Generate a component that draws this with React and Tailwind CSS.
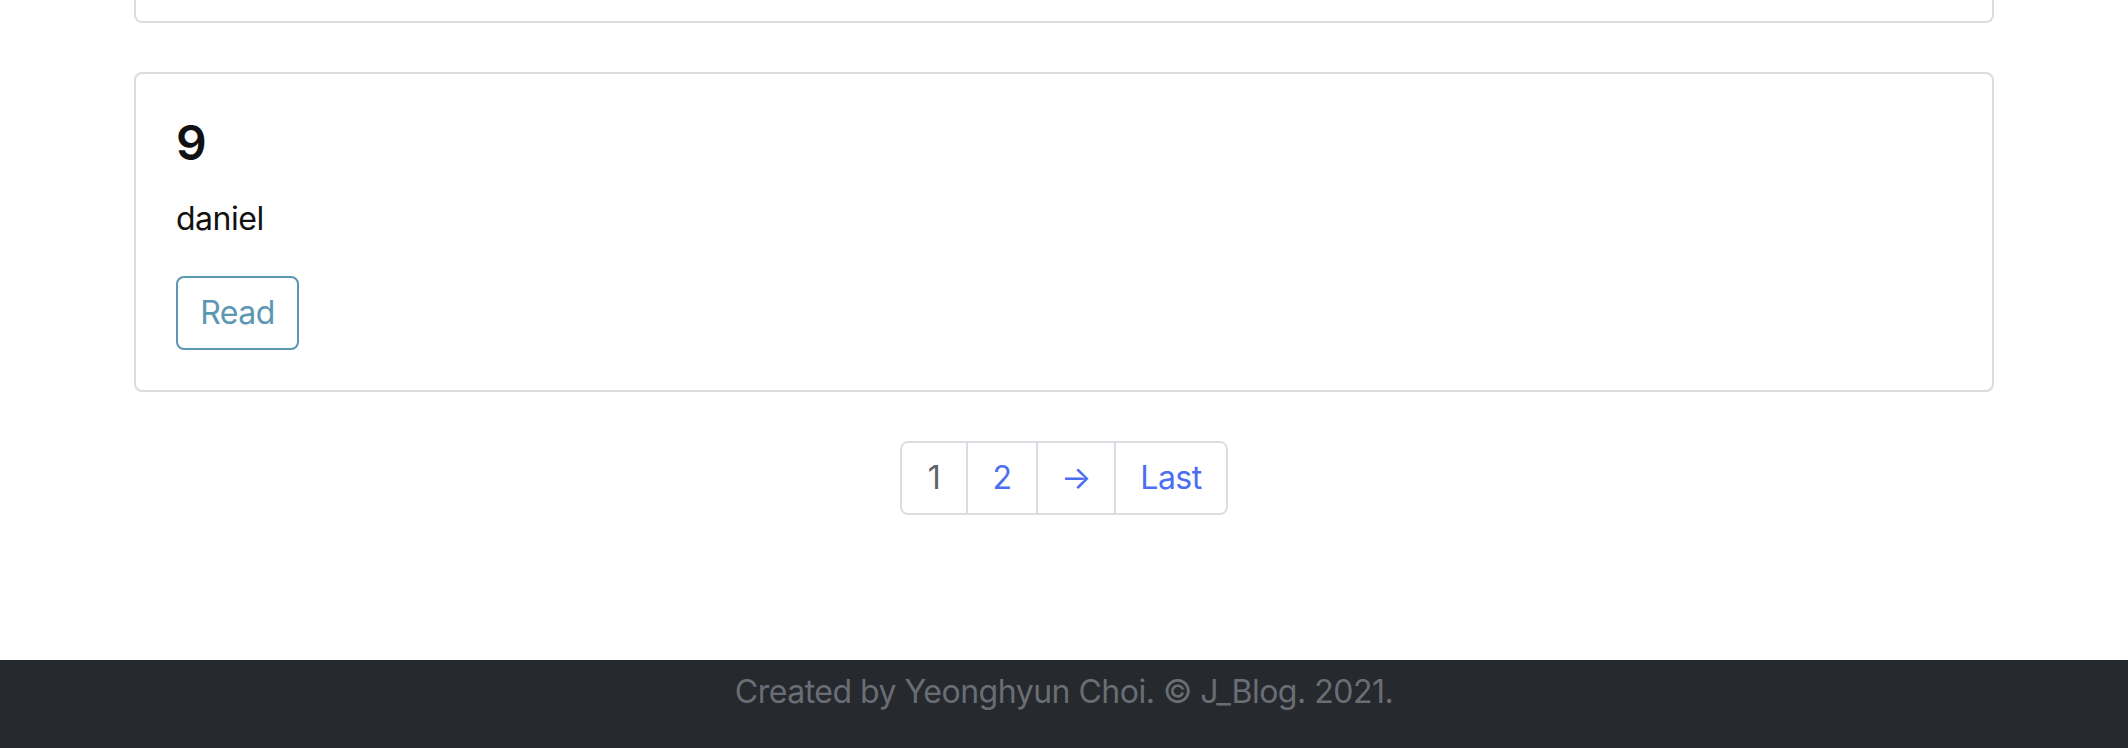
export default function App() {
  const pages = [
    { label: "1", w: "w-[64px]", active: true },
    { label: "2", w: "w-[70px]" },
    { label: "→", w: "w-[78px]" },
    { label: "Last", w: "w-[112px]" },
  ];

  return (
    <div className="min-h-[748px] flex flex-col bg-white font-['Inter','Liberation_Sans',sans-serif] tracking-[-0.5px] text-[#212529]">
      <main className="flex-1 px-[134px]">
        {/* previous post card, cut off at the top */}
        <div className="h-[23px] border-x-2 border-b-2 border-[#dcdcdc] rounded-b-[8px]" />

        {/* post card */}
        <div className="mt-[49px] border-2 border-[#dcdcdc] rounded-[8px] p-[40px]">
          <h5 className="text-[48px] leading-[1.2] font-semibold text-[#111]">9</h5>
          <p className="mt-[23px] text-[32px] leading-[1.5] text-[#111]">daniel</p>
          <button className="mt-[33px] w-[123px] h-[74px] flex items-center justify-center border-2 border-[#5b97b3] rounded-[8px] text-[32px] text-[#5b97b3]">
            Read
          </button>
        </div>

        {/* pagination */}
        <nav className="mt-[49px] flex justify-center">
          <ul className="flex h-[74px] border-2 border-[#dcdde2] rounded-[8px] overflow-hidden">
            {pages.map((p, i) => (
              <li
                key={p.label}
                className={`${p.w} flex items-center justify-center text-[32px] ${
                  i > 0 ? "border-l-2 border-[#dcdde2]" : ""
                } ${p.active ? "text-[#5f6368]" : "text-[#4d6ef0]"}`}
              >
                {p.label}
              </li>
            ))}
          </ul>
        </nav>
      </main>

      <footer className="mt-[145px] h-[88px] bg-[#26292e] pt-[8px] text-center text-[32px] leading-[1.5] text-[#6a6e74]">
        Created by Yeonghyun Choi. © J_Blog. 2021.
      </footer>
    </div>
  );
}
